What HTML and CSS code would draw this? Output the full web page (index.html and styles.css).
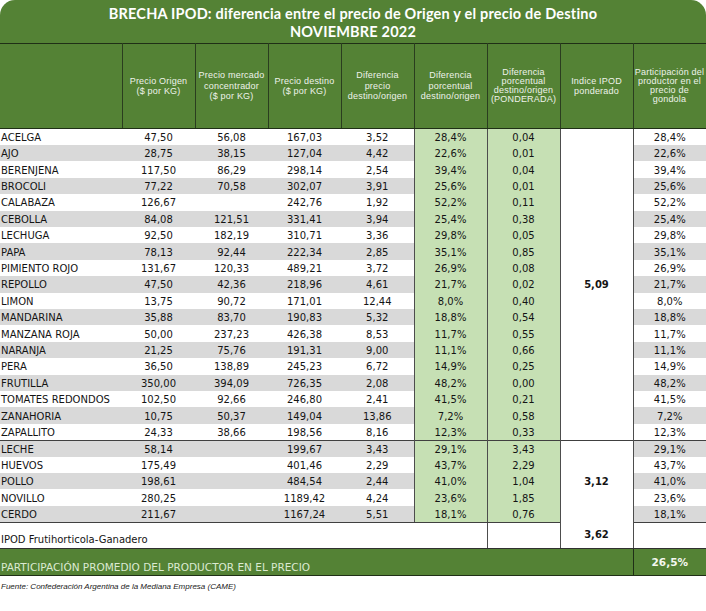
FILE: index.html
```html
<!DOCTYPE html>
<html lang="es">
<head>
<meta charset="utf-8">
<title>BRECHA IPOD</title>
<link rel="stylesheet" href="styles.css">
</head>
<body>
<div class="sheet">
  <div class="title">BRECHA IPOD: diferencia entre el precio de Origen y el precio de Destino<br>NOVIEMBRE 2022</div>
  <table class="grid">
    <colgroup>
      <col class="c-name"><col class="c"><col class="c"><col class="c"><col class="c"><col class="c"><col class="c"><col class="c"><col class="c">
    </colgroup>
    <thead>
      <tr>
        <th></th>
        <th>Precio Origen<br>($ por KG)</th>
        <th>Precio mercado<br>concentrador<br>($ por KG)</th>
        <th>Precio destino<br>($ por KG)</th>
        <th>Diferencia<br>precio<br>destino/origen</th>
        <th>Diferencia<br>porcentual<br>destino/origen</th>
        <th class="tight">Diferencia<br>porcentual<br>destino/origen<br>(PONDERADA)</th>
        <th>Indice IPOD<br>ponderado</th>
        <th class="tight">Participación del<br>productor en el<br>precio de<br>gondola</th>
      </tr>
    </thead>
    <tbody>
      <tr><td class="n">ACELGA</td><td>47,50</td><td>56,08</td><td>167,03</td><td>3,52</td><td class="g">28,4%</td><td class="g">0,04</td><td class="ipod" rowspan="19">5,09</td><td class="p">28,4%</td></tr>
      <tr class="alt"><td class="n">AJO</td><td>28,75</td><td>38,15</td><td>127,04</td><td>4,42</td><td class="g">22,6%</td><td class="g">0,01</td><td class="p">22,6%</td></tr>
      <tr><td class="n">BERENJENA</td><td>117,50</td><td>86,29</td><td>298,14</td><td>2,54</td><td class="g">39,4%</td><td class="g">0,04</td><td class="p">39,4%</td></tr>
      <tr class="alt"><td class="n">BROCOLI</td><td>77,22</td><td>70,58</td><td>302,07</td><td>3,91</td><td class="g">25,6%</td><td class="g">0,01</td><td class="p">25,6%</td></tr>
      <tr><td class="n">CALABAZA</td><td>126,67</td><td></td><td>242,76</td><td>1,92</td><td class="g">52,2%</td><td class="g">0,11</td><td class="p">52,2%</td></tr>
      <tr class="alt"><td class="n">CEBOLLA</td><td>84,08</td><td>121,51</td><td>331,41</td><td>3,94</td><td class="g">25,4%</td><td class="g">0,38</td><td class="p">25,4%</td></tr>
      <tr><td class="n">LECHUGA</td><td>92,50</td><td>182,19</td><td>310,71</td><td>3,36</td><td class="g">29,8%</td><td class="g">0,05</td><td class="p">29,8%</td></tr>
      <tr class="alt"><td class="n">PAPA</td><td>78,13</td><td>92,44</td><td>222,34</td><td>2,85</td><td class="g">35,1%</td><td class="g">0,85</td><td class="p">35,1%</td></tr>
      <tr><td class="n">PIMIENTO ROJO</td><td>131,67</td><td>120,33</td><td>489,21</td><td>3,72</td><td class="g">26,9%</td><td class="g">0,08</td><td class="p">26,9%</td></tr>
      <tr class="alt"><td class="n">REPOLLO</td><td>47,50</td><td>42,36</td><td>218,96</td><td>4,61</td><td class="g">21,7%</td><td class="g">0,02</td><td class="p">21,7%</td></tr>
      <tr><td class="n">LIMON</td><td>13,75</td><td>90,72</td><td>171,01</td><td>12,44</td><td class="g">8,0%</td><td class="g">0,40</td><td class="p">8,0%</td></tr>
      <tr class="alt"><td class="n">MANDARINA</td><td>35,88</td><td>83,70</td><td>190,83</td><td>5,32</td><td class="g">18,8%</td><td class="g">0,54</td><td class="p">18,8%</td></tr>
      <tr><td class="n">MANZANA ROJA</td><td>50,00</td><td>237,23</td><td>426,38</td><td>8,53</td><td class="g">11,7%</td><td class="g">0,55</td><td class="p">11,7%</td></tr>
      <tr class="alt"><td class="n">NARANJA</td><td>21,25</td><td>75,76</td><td>191,31</td><td>9,00</td><td class="g">11,1%</td><td class="g">0,66</td><td class="p">11,1%</td></tr>
      <tr><td class="n">PERA</td><td>36,50</td><td>138,89</td><td>245,23</td><td>6,72</td><td class="g">14,9%</td><td class="g">0,25</td><td class="p">14,9%</td></tr>
      <tr class="alt"><td class="n">FRUTILLA</td><td>350,00</td><td>394,09</td><td>726,35</td><td>2,08</td><td class="g">48,2%</td><td class="g">0,00</td><td class="p">48,2%</td></tr>
      <tr><td class="n">TOMATES REDONDOS</td><td>102,50</td><td>92,66</td><td>246,80</td><td>2,41</td><td class="g">41,5%</td><td class="g">0,21</td><td class="p">41,5%</td></tr>
      <tr class="alt"><td class="n">ZANAHORIA</td><td>10,75</td><td>50,37</td><td>149,04</td><td>13,86</td><td class="g">7,2%</td><td class="g">0,58</td><td class="p">7,2%</td></tr>
      <tr><td class="n">ZAPALLITO</td><td>24,33</td><td>38,66</td><td>198,56</td><td>8,16</td><td class="g">12,3%</td><td class="g">0,33</td><td class="p">12,3%</td></tr>
      <tr class="alt sep"><td class="n">LECHE</td><td>58,14</td><td></td><td>199,67</td><td>3,43</td><td class="g">29,1%</td><td class="g">3,43</td><td class="ipod" rowspan="5">3,12</td><td class="p">29,1%</td></tr>
      <tr><td class="n">HUEVOS</td><td>175,49</td><td></td><td>401,46</td><td>2,29</td><td class="g">43,7%</td><td class="g">2,29</td><td class="p">43,7%</td></tr>
      <tr class="alt"><td class="n">POLLO</td><td>198,61</td><td></td><td>484,54</td><td>2,44</td><td class="g">41,0%</td><td class="g">1,04</td><td class="p">41,0%</td></tr>
      <tr><td class="n">NOVILLO</td><td>280,25</td><td></td><td>1189,42</td><td>4,24</td><td class="g">23,6%</td><td class="g">1,85</td><td class="p">23,6%</td></tr>
      <tr class="alt last"><td class="n">CERDO</td><td>211,67</td><td></td><td>1167,24</td><td>5,51</td><td class="g">18,1%</td><td class="g">0,76</td><td class="p">18,1%</td></tr>
      <tr class="total"><td class="n" colspan="6">IPOD Frutihorticola-Ganadero</td><td class="bl"></td><td class="ipod-total">3,62</td><td class="bl"></td></tr>
      <tr class="foot"><td class="foot-label" colspan="8">PARTICIPACIÓN PROMEDIO DEL PRODUCTOR EN EL PRECIO</td><td class="foot-value">26,5%</td></tr>
    </tbody>
  </table>
  <p class="source">Fuente: Confederación Argentina de la Mediana Empresa (CAME)</p>
</div>
</body>
</html>
```
FILE: styles.css
```css
html, body {
  margin: 0;
  padding: 0;
  background: #ffffff;
}

.sheet {
  width: 706px;
}

.title {
  height: 43px;
  box-sizing: border-box;
  padding-top: 5px;
  background: #548235;
  border-radius: 15px 15px 0 0;
  color: #ffffff;
  font-family: Lato, "Open Sans", sans-serif;
  font-weight: 700;
  font-size: 14.5px;
  letter-spacing: 0.2px;
  line-height: 18px;
  text-align: center;
}

.grid {
  width: 706px;
  border-collapse: collapse;
  table-layout: fixed;
  font-family: "DejaVu Sans", Verdana, sans-serif;
  font-size: 10px;
  color: #141414;
}

.c-name { width: 122px; }
.c { width: 73px; }

.grid thead th {
  height: 84px;
  padding: 0;
  background: #548235;
  color: #eef2ea;
  font-family: "Liberation Sans", Arial, sans-serif;
  font-weight: 400;
  font-size: 9px;
  letter-spacing: 0.2px;
  line-height: 10.5px;
  text-align: center;
  vertical-align: middle;
  border-top: 1px solid #1f2f16;
  border-bottom: 1px solid #1f2f16;
  border-left: 1px solid #2a3d1f;
  border-right: 1px solid #2a3d1f;
}

.grid thead th:first-child { border-left: none; }
.grid thead th.tight { line-height: 9.2px; }

.grid tbody tr { height: 16.42px; }

.grid tbody td {
  padding: 2px 0 0 0;
  text-align: center;
  vertical-align: middle;
  white-space: nowrap;
  line-height: 12px;
}

.grid tbody td.n {
  text-align: left;
  padding-left: 1px;
}

.grid tbody tr.alt td { background: #d9d9d9; }

.grid tbody td.g,
.grid tbody tr.alt td.g {
  background: #c6e0b4;
  border-left: 1px solid #4d4d4d;
}

.grid tbody td.ipod,
.grid tbody tr.alt td.ipod {
  background: #ffffff;
  font-weight: 700;
  border-left: 1px solid #4d4d4d;
  border-right: 1px solid #4d4d4d;
}

.grid tbody tr.sep td { border-top: 1px solid #404040; }
.grid tbody tr.last td { border-bottom: 1px solid #404040; }

.grid tbody tr.total { height: 26px; }

.grid tbody tr.total td {
  background: #ffffff;
  border-bottom: 1px solid #303030;
  vertical-align: bottom;
  padding: 0 0 2px 0;
}

.grid tbody tr.total td.n { padding-left: 1px; }
.grid tbody tr.total td.bl { border-left: 1px solid #4d4d4d; }

.grid tbody tr.total td.ipod-total {
  border-left: 1px solid #4d4d4d;
  font-weight: 700;
  vertical-align: middle;
  padding: 0;
}

.grid tbody tr.foot { height: 27px; }

.grid tbody tr.foot td {
  background: #548235;
  border-bottom: 1px solid #1f2f16;
}

.grid tbody td.foot-label {
  text-align: left;
  padding: 0 0 2px 1px;
  color: #dcead2;
  font-size: 10.5px;
  vertical-align: bottom;
}

.grid tbody td.foot-value {
  padding: 0;
  color: #f4f8f0;
  font-weight: 700;
  font-size: 10.5px;
  border-left: 1px solid #1f2f16;
}

.source {
  margin: 6px 0 0 1px;
  font-family: "Liberation Sans", Arial, sans-serif;
  font-style: italic;
  font-size: 8px;
  color: #1a1a1a;
}
```
